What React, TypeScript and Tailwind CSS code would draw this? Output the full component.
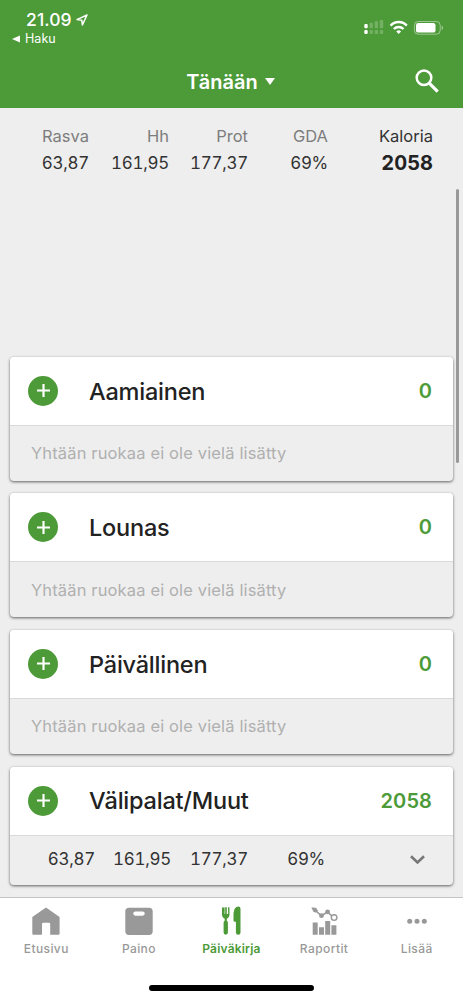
import type { ReactNode } from 'react'

interface Meal {
  name: string
  calories: number
  nutrients?: string[]
}

interface Summary {
  label: string
  value: string
  width: string
}

const summary: Summary[] = [
  { label: 'Rasva', value: '63,87', width: 'w-[89px]' },
  { label: 'Hh', value: '161,95', width: 'w-20' },
  { label: 'Prot', value: '177,37', width: 'w-[79px]' },
  { label: 'GDA', value: '69%', width: 'w-20' },
]

const nutrientWidths = ['w-[95px]', 'w-[76px]', 'w-[77px]', 'w-[77px]']

const meals: Meal[] = [
  { name: 'Aamiainen', calories: 0 },
  { name: 'Lounas', calories: 0 },
  { name: 'Päivällinen', calories: 0 },
  { name: 'Välipalat/Muut', calories: 2058, nutrients: ['63,87', '161,95', '177,37', '69%'] },
]

function StatusBar() {
  return (
    <div className="flex h-[54px] justify-between">
      <div className="pl-3 pt-[10px]">
        <div className="flex items-center pl-[14px]">
          <span className="text-[17.5px] leading-[20px] font-medium tracking-[0.1px]">21.09</span>
          <svg className="ml-[4px] h-3 w-3" viewBox="0 0 12 12" fill="none" stroke="currentColor" strokeWidth="1.5" strokeLinejoin="round">
            <path d="M11 1 1 5.6l4.8.6.6 4.8z" />
          </svg>
        </div>
        <div className="mt-[1px] flex items-center">
          <svg className="h-2 w-2" viewBox="0 0 8 8" fill="currentColor">
            <path d="M8 .5v7L0 4z" />
          </svg>
          <span className="ml-[5px] text-[12.5px] leading-4 tracking-[0.05px]">Haku</span>
        </div>
      </div>

      <svg className="mt-[18px] mr-[18px] h-[18px] w-[82px]" viewBox="0 0 82 18" fill="currentColor">
        {/* dual sim signal */}
        <rect x="1.3" y="6" width="3.4" height="4.3" rx="1" />
        <rect x="1.3" y="12" width="3.4" height="4" rx="1" />
        <g opacity="0.22">
          <rect x="6.5" y="4.7" width="3.4" height="5.6" rx="1" />
          <rect x="11.7" y="3.3" width="3.4" height="7" rx="1" />
          <rect x="16.8" y="2" width="3.4" height="8.3" rx="1" />
          <rect x="6.5" y="12" width="3.4" height="4" rx="1" />
          <rect x="11.7" y="12" width="3.4" height="4" rx="1" />
          <rect x="16.8" y="12" width="3.4" height="4" rx="1" />
        </g>
        {/* wifi */}
        <g fill="none" stroke="currentColor" strokeWidth="2.4">
          <path d="M27.6 7.6a10.8 10.8 0 0 1 16.2 0" />
          <path d="M30.9 11a6.8 6.8 0 0 1 9.6 0" />
        </g>
        <path d="M33.3 13.4a3.5 3.5 0 0 1 4.8 0L35.7 16z" />
        {/* battery */}
        <rect x="51.4" y="3.5" width="25.8" height="12.7" rx="3.8" fill="none" stroke="currentColor" strokeOpacity="0.45" />
        <rect x="53" y="5.1" width="19.5" height="9.5" rx="2.2" />
        <path d="M78.7 7.7c1.8.5 1.8 3.8 0 4.3z" opacity="0.5" />
      </svg>
    </div>
  )
}

function Header() {
  return (
    <header className="h-[108px] shrink-0 bg-[#4c9a38] text-white">
      <StatusBar />
      <div className="flex h-[54px] items-center">
        <div className="w-14" />
        <button className="flex flex-1 items-center justify-center pt-[1px] pr-[2px]">
          <span className="text-[20px] leading-6 font-semibold">Tänään</span>
          <svg className="ml-[7px] h-[7px] w-[10px]" viewBox="0 0 10 7" fill="currentColor">
            <path d="M0 0h10L5 7z" />
          </svg>
        </button>
        <button className="w-14">
          <svg className="ml-[8px] h-6 w-6" viewBox="0 0 24 24" fill="none" stroke="currentColor">
            <circle cx="9" cy="8.8" r="7.3" strokeWidth="2.5" />
            <path d="m14.2 14.2 8.5 8.5" strokeWidth="3.2" />
          </svg>
        </button>
      </div>
    </header>
  )
}

function MealCard({ meal }: { meal: Meal }) {
  return (
    <section className="shrink-0 overflow-hidden rounded-[4px] bg-[#eee] shadow-[0_1px_3px_rgba(0,0,0,0.6)]">
      <div className="flex h-[69px] items-center border-b border-[#d9d9d9] bg-white pr-[21px] pl-[18px]">
        <button className="flex h-[30px] w-[30px] items-center justify-center rounded-full bg-[#4c9a38]">
          <svg className="h-[13px] w-[13px]" viewBox="0 0 13 13" stroke="#fff" strokeWidth="2.2">
            <path d="M6.5 0v13M0 6.5h13" />
          </svg>
        </button>
        <h2 className="ml-[31px] flex-1 pt-[1px] text-[23.5px] font-medium tracking-[-0.22px] text-[#222]">{meal.name}</h2>
        <span className="text-[20px] font-semibold tracking-[0.1px] text-[#4c9a38]">{meal.calories}</span>
      </div>
      {meal.nutrients ? (
        <div className="-ml-[10px] flex h-[49px] items-center text-right text-[17px] tracking-[-0.3px] text-[#333] tabular-nums">
          {meal.nutrients.map((n, i) => (
            <span key={n} className={nutrientWidths[i]}>
              {n}
            </span>
          ))}
          <svg className="ml-[85px] h-[10px] w-[15px]" viewBox="0 0 15 10" fill="none" stroke="#777" strokeWidth="2.6">
            <path d="m1 1.2 6.5 6.3L14 1.2" />
          </svg>
        </div>
      ) : (
        <p className="flex h-[55px] items-center pl-[21px] text-[16.5px] tracking-[0.14px] text-[#b0b0b0]">
          Yhtään ruokaa ei ole vielä lisätty
        </p>
      )}
    </section>
  )
}

function Tab({ label, active, children }: { label: string; active?: boolean; children: ReactNode }) {
  return (
    <button className={`flex flex-1 basis-0 flex-col items-center pt-[8px] ${active ? 'text-[#4c9a38]' : 'text-[#999]'}`}>
      <svg className="h-8 w-8" viewBox="0 0 32 32" fill="currentColor">
        {children}
      </svg>
      <span
        className={`mt-[3px] text-[12px] leading-4 ${active ? 'font-semibold tracking-[0.2px]' : 'font-medium tracking-[0.4px]'}`}
      >
        {label}
      </span>
    </button>
  )
}

function TabBar() {
  return (
    <nav className="h-[103px] shrink-0 border-t border-[#c4c4c4] bg-white">
      <div className="flex">
        <Tab label="Etusivu">
          <path d="M16 1.5 29.6 11v16.5q0 1.2-1.2 1.2h-8.2V18q0-1.3-1.3-1.3h-5.6q-1.3 0-1.3 1.3v10.7H3.5q-1.2 0-1.2-1.2V11z" />
        </Tab>
        <Tab label="Paino">
          <path
            fillRule="evenodd"
            d="M6 1.7h20a3.7 3.7 0 0 1 3.7 3.7v19.8A3.7 3.7 0 0 1 26 28.9H6a3.7 3.7 0 0 1-3.7-3.7V5.4A3.7 3.7 0 0 1 6 1.7zM12.4 5.4a2.1 2.1 0 0 0 0 4.3h7.2a2.1 2.1 0 0 0 0-4.3z"
          />
        </Tab>
        <Tab label="Päiväkirja" active>
          <path d="M7 1.8v6.5q0 3.4 2.7 4.5v2q-1.1.6-1.1 2v9.8a2.1 2.1 0 0 0 4.3 0v-9.8q0-1.4-1.1-2v-2q2.7-1.1 2.7-4.5V1.8a.7.7 0 0 0-1.4 0v6.1h-1.3V1.8a.8.8 0 0 0-1.6 0v6.1H9.6V1.8a.8.8 0 0 0-1.3 0 .7.7 0 0 0-1.3 0z" />
          <path d="M25.5 2.4v24a2.3 2.3 0 0 1-4.6 0V15.7h-1.4q-1-.2-1-1.4V7.5Q19 .4 23.4.4q2.1 0 2.1 2z" />
        </Tab>
        <Tab label="Raportit">
          <path d="M4.7 16.4h5v12.4h-5zM11 21.2h5v7.6h-5zM17.2 15.1h5v13.7h-5zM23.4 19.2h5v9.6h-5z" />
          <path d="m4.4 2.2 3.2 2.5 5.8 5 6-3.7 5.9 5.1" fill="none" stroke="currentColor" strokeWidth="1.5" />
          <path d="M3.4 1.6 8 1.8l2 3-2.6 2-2.2-1.6z" />
          <circle cx="13.5" cy="9.7" r="2.4" />
          <circle cx="19.6" cy="5.8" r="2.4" />
          <circle cx="26.1" cy="11.6" r="2.8" fill="#fff" stroke="currentColor" strokeWidth="1.4" />
        </Tab>
        <Tab label="Lisää">
          <circle cx="8.7" cy="15.3" r="2.5" />
          <circle cx="16" cy="15.3" r="2.5" />
          <circle cx="23.3" cy="15.3" r="2.5" />
        </Tab>
      </div>
      {/* home indicator */}
      <div className="mx-auto mt-[28px] h-[6px] w-[165px] rounded-full bg-black" />
    </nav>
  )
}

export default function App() {
  return (
    <div className="relative flex h-[1000px] w-[463px] flex-col overflow-hidden bg-[#eee] font-['Inter',sans-serif]">
      <Header />
      <div className="flex h-[240.8px] shrink-0 pt-[15px] text-right text-[17px] leading-[27px] tracking-[-0.3px] text-[#333] tabular-nums">
        {summary.map((s) => (
          <div key={s.label} className={s.width}>
            <div className="text-[16.5px] tracking-normal text-[#7d7d7d]">{s.label}</div>
            <div>{s.value}</div>
          </div>
        ))}
        <div className="w-[105px]">
          <div className="text-[16.5px] tracking-normal">Kaloria</div>
          <div className="text-[20px] font-bold tracking-normal text-[#222]">2058</div>
        </div>
      </div>

      <main className="flex min-h-0 flex-1 flex-col gap-[12.6px] overflow-hidden px-[10px] pt-2">
        {meals.map((meal) => (
          <MealCard key={meal.name} meal={meal} />
        ))}
      </main>
      <TabBar />

      {/* scroll thumb */}
      <div className="absolute top-[189px] right-[4px] h-[274px] w-[3px] rounded-full bg-[#999]" />
    </div>
  )
}
